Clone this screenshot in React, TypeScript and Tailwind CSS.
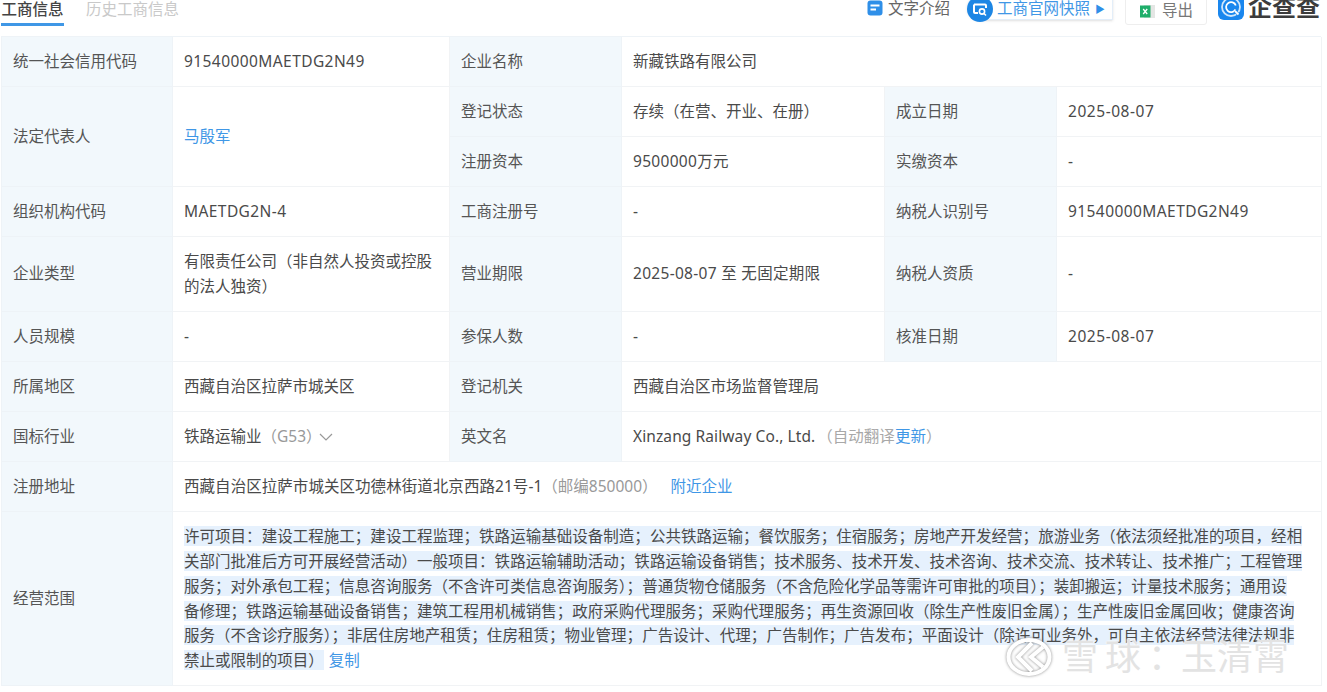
const scope = [
  "许可项目：建设工程施工；建设工程监理；铁路运输基础设备制造；公共铁路运输；餐饮服务；住宿服务；房地产开发经营；旅游业务（依法须经批准的项目，经相",
  "关部门批准后方可开展经营活动）一般项目：铁路运输辅助活动；铁路运输设备销售；技术服务、技术开发、技术咨询、技术交流、技术转让、技术推广；工程管理",
  "服务；对外承包工程；信息咨询服务（不含许可类信息咨询服务）；普通货物仓储服务（不含危险化学品等需许可审批的项目）；装卸搬运；计量技术服务；通用设",
  "备修理；铁路运输基础设备销售；建筑工程用机械销售；政府采购代理服务；采购代理服务；再生资源回收（除生产性废旧金属）；生产性废旧金属回收；健康咨询",
  "服务（不含诊疗服务）；非居住房地产租赁；住房租赁；物业管理；广告设计、代理；广告制作；广告发布；平面设计（除许可业务外，可自主依法经营法律法规非",
];

function Label({ children, className = "" }: { children: React.ReactNode; className?: string }) {
  return (
    <div className={`flex items-center border-r border-b border-[#eef3f7] bg-[#f2f8fc] pl-[11px] text-[#555] ${className}`}>
      {children}
    </div>
  );
}

function Value({ children, className = "" }: { children: React.ReactNode; className?: string }) {
  return (
    <div className={`flex items-center border-r border-b border-[#f1f3f5] bg-white pl-[11px] pr-2 text-[#4a4a4a] ${className}`}>
      {children}
    </div>
  );
}

function DocIcon() {
  return (
    <svg width="16" height="16" viewBox="0 0 16 16">
      <rect x="0.5" y="0.5" width="15" height="15" rx="3" fill="#2f8fe8" />
      <rect x="3.5" y="4.5" width="9" height="2" fill="#fff" />
      <rect x="3.5" y="8.5" width="5.5" height="2" fill="#fff" />
    </svg>
  );
}

function SnapshotIcon() {
  return (
    <svg width="26" height="26" viewBox="0 0 26 26">
      <circle cx="13" cy="13" r="13" fill="#1d86e4" />
      <path d="M7 8.5h11a1 1 0 0 1 1 1V12M11 17H8a1 1 0 0 1-1-1V8.5" fill="none" stroke="#fff" strokeWidth="2" />
      <circle cx="15" cy="15.5" r="2.6" fill="none" stroke="#fff" strokeWidth="1.6" />
      <path d="M17 17.5l2 2" stroke="#fff" strokeWidth="1.6" />
    </svg>
  );
}

function ExcelIcon() {
  return (
    <svg width="17" height="17" viewBox="0 0 17 17">
      <rect x="5" y="2" width="11" height="13" fill="#e4e6e4" />
      <rect x="1" y="2.5" width="10.5" height="12" fill="#1fae6a" />
      <path d="M4.2 6l4 5M8.2 6l-4 5" stroke="#fff" strokeWidth="1.3" />
    </svg>
  );
}

function LogoIcon() {
  return (
    <svg width="26" height="26" viewBox="0 0 26 26">
      <rect width="26" height="26" rx="6" fill="#1a87ee" />
      <circle cx="13" cy="13" r="9" fill="none" stroke="#cfe6fb" strokeWidth="1.8" />
      <path d="M17.5 15.5a5 5 0 1 1 .3-4" fill="none" stroke="#fff" strokeWidth="1.8" />
      <path d="M17 17l4.5 4.5" stroke="#1a87ee" strokeWidth="3" />
      <path d="M17 17l3.5 3.5" stroke="#fff" strokeWidth="1.8" />
    </svg>
  );
}

function SnowballMark() {
  return (
    <svg className="drop-shadow-[0_0_1.5px_rgba(90,90,90,0.7)]" width="46" height="38" viewBox="0 0 46 38" fill="none" stroke="#ffffff" strokeWidth="4">
      <ellipse cx="23" cy="19" rx="20.5" ry="17" />
      <path d="M26 5L12 19l14 14M37 9L25 19l12 10" />
    </svg>
  );
}

export default function App() {
  return (
    <div className="relative h-[692px] w-[1327px] overflow-hidden bg-white text-[15.5px] leading-none font-['Noto_Sans','Noto_Sans_CJK_SC',sans-serif]">
      <div className="flex h-9 items-start justify-between overflow-hidden pr-[7px]">
        <div className="flex">
          <div className="ml-px flex h-[26px] w-[63px] items-start justify-center border-b-[3px] border-[#3f97e6] font-medium whitespace-nowrap text-[#444]">
            <span className="leading-[18px]">工商信息</span>
          </div>
          <span className="ml-[22px] leading-[18px] text-[#c9c9c9]">历史工商信息</span>
        </div>
        <div className="flex items-start">
          <div className="flex items-center gap-[5px] text-[#666]">
            <DocIcon />
            <span className="leading-4">文字介绍</span>
          </div>
          <div className="relative ml-[17px] -mt-[5px] flex h-[25px] w-[146px] items-center rounded-r-[5px] rounded-l-full border border-[#e3eef9] pt-[3px] text-[#3f97e6] shadow-sm">
            <div className="absolute -left-px top-0"><SnapshotIcon /></div>
            <span className="ml-[29px]">工商官网快照</span>
            <span className="ml-[5px] text-[10px] text-[#2f8fe8]">▶</span>
          </div>
          <div className="ml-[12px] -mt-[5px] flex h-[30px] w-[82px] items-center justify-center gap-[6px] rounded-[3px] border border-[#eeeeee] pt-[2px] text-[#777]">
            <ExcelIcon />
            <span>导出</span>
          </div>
          <div className="ml-[11px] -mt-[6px] flex items-center gap-[4px]">
            <LogoIcon />
            <span className="text-[24px] leading-6 font-bold text-[#3c3c3c]">企查查</span>
          </div>
        </div>
      </div>

      <div className="ml-[1px] grid w-[1320px] grid-cols-[171px_277px_172px_263px_172px_265px] grid-rows-[50px_50px_50px_50px_75px_50px_50px_50px_50px_174px] border-t border-l border-[#eef3f7]">
        <Label>统一社会信用代码</Label>
        <Value className="tracking-[0.42px]">91540000MAETDG2N49</Value>
        <Label>企业名称</Label>
        <Value className="col-span-3">新藏铁路有限公司</Value>

        <Label className="row-span-2">法定代表人</Label>
        <Value className="row-span-2">
          <span className="text-[#3f97e6]">马殷军</span>
        </Value>
        <Label>登记状态</Label>
        <Value>存续（在营、开业、在册）</Value>
        <Label>成立日期</Label>
        <Value className="tracking-[0.55px]">2025-08-07</Value>

        <Label>注册资本</Label>
        <Value className="tracking-[0.3px]">9500000万元</Value>
        <Label>实缴资本</Label>
        <Value>-</Value>

        <Label>组织机构代码</Label>
        <Value className="tracking-[0.42px]">MAETDG2N-4</Value>
        <Label>工商注册号</Label>
        <Value>-</Value>
        <Label>纳税人识别号</Label>
        <Value className="tracking-[0.42px]">91540000MAETDG2N49</Value>

        <Label>企业类型</Label>
        <Value className="pr-4 leading-[25px]">有限责任公司（非自然人投资或控股的法人独资）</Value>
        <Label>营业期限</Label>
        <Value className="tracking-[0.3px]">2025-08-07 至 无固定期限</Value>
        <Label>纳税人资质</Label>
        <Value>-</Value>

        <Label>人员规模</Label>
        <Value>-</Value>
        <Label>参保人数</Label>
        <Value>-</Value>
        <Label>核准日期</Label>
        <Value className="tracking-[0.55px]">2025-08-07</Value>

        <Label>所属地区</Label>
        <Value>西藏自治区拉萨市城关区</Value>
        <Label>登记机关</Label>
        <Value className="col-span-3">西藏自治区市场监督管理局</Value>

        <Label>国标行业</Label>
        <Value>
          铁路运输业<span className="text-[#999]">（G53）</span>
          <svg className="-ml-[3px]" width="14" height="8" viewBox="0 0 14 8" fill="none" stroke="#999" strokeWidth="1.2">
            <path d="M1 1l6 6 6-6" />
          </svg>
        </Value>
        <Label>英文名</Label>
        <Value className="col-span-3">
          <span className="tracking-[0.1px]">Xinzang Railway Co., Ltd.</span>
          <span className="ml-[2px] text-[#a8a8a8]">（自动翻译<span className="text-[#3f97e6]">更新</span>）</span>
        </Value>

        <Label>注册地址</Label>
        <Value className="col-span-5">
          <span className="tracking-[0.05px]">西藏自治区拉萨市城关区功德林街道北京西路21号-1</span>
          <span className="text-[#999]">（邮编850000）</span>
          <span className="ml-[13px] text-[#3f97e6]">附近企业</span>
        </Value>

        <Label>经营范围</Label>
        <Value className="col-span-5">
          <div className="pt-[4px] whitespace-nowrap tracking-[0.03px]">
            {scope.map((line) => (
              <div key={line} className="h-[24.8px]">
                <span className="inline-block bg-[#e6f1fd] leading-5">{line}</span>
              </div>
            ))}
            <div className="h-[24.8px]">
              <span className="inline-block bg-[#e6f1fd] leading-5">禁止或限制的项目）</span>
              <span className="ml-[5px] text-[#3f97e6]">复制</span>
            </div>
          </div>
        </Value>
      </div>

      <div className="absolute left-[1006px] top-[635px] flex items-center gap-[10px] text-[36px] leading-[44px] whitespace-nowrap text-[#e3e3e3] [text-shadow:0_0_2px_#ffffff,0_0_2px_#ffffff]">
        <SnowballMark />
        <span>
          <span className="tracking-[7px]">雪球</span>
          <span className="-mr-[3px]">：</span>
          玉清霄
        </span>
      </div>
    </div>
  );
}
